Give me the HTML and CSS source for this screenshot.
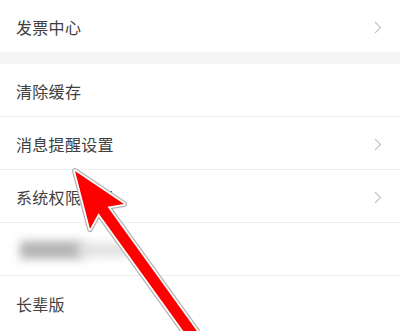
FILE: index.html
```html
<!DOCTYPE html>
<html>
<head>
<meta charset="utf-8">
<link rel="stylesheet" href="styles.css">
</head>
<body>
<div class="page">
  <div class="group">
    <div class="row first"><span class="label">发票中心</span><svg class="chev" width="8" height="13" viewBox="0 0 8 13"><polyline points="1,1 6.5,6.5 1,12" /></svg></div>
  </div>
  <div class="gap"></div>
  <div class="group">
    <div class="row"><span class="label">清除缓存</span></div>
    <div class="row"><span class="label">消息提醒设置</span><svg class="chev" width="8" height="13" viewBox="0 0 8 13"><polyline points="1,1 6.5,6.5 1,12" /></svg></div>
    <div class="row"><span class="label">系统权限设置</span><svg class="chev" width="8" height="13" viewBox="0 0 8 13"><polyline points="1,1 6.5,6.5 1,12" /></svg></div>
    <div class="row"><div class="blur"><span class="b1"></span><span class="b2"></span></div></div>
    <div class="row last"><span class="label">长辈版</span></div>
  </div>
  <svg class="arrow" width="400" height="331" viewBox="0 0 400 331">
    <polygon class="a-out" points="75,171 124,204 107.5,206.8 208,346.4 199,352.8 98.5,213.2 90,229"/>
    <polygon class="a-mid" points="75,171 124,204 107.5,206.8 208,346.4 199,352.8 98.5,213.2 90,229"/>
    <polygon class="a-in" points="75,171 124,204 107.5,206.8 208,346.4 199,352.8 98.5,213.2 90,229"/>
  </svg>
</div>
</body>
</html>
```

FILE: styles.css
```css
html, body {
  margin: 0;
  padding: 0;
  background: #ffffff;
}
.page {
  position: relative;
  width: 400px;
  height: 331px;
  overflow: hidden;
  font-family: "Noto Sans CJK SC", "Noto Sans", sans-serif;
}
.group {
  background: #ffffff;
}
.gap {
  height: 12px;
  background: #f5f5f5;
}
.row {
  height: 53px;
  box-sizing: border-box;
  border-bottom: 1px solid #efefef;
  display: flex;
  align-items: center;
  justify-content: space-between;
  padding: 2px 18px 0 16px;
}
.row.first {
  height: 52px;
  border-bottom: none;
}
.row.last {
  height: 54px;
  border-bottom: none;
}
.label {
  font-size: 16px;
  color: #404040;
  letter-spacing: 0.3px;
}
.chev polyline {
  fill: none;
  stroke: #c6c6c6;
  stroke-width: 1.2;
}
.blur {
  position: relative;
  width: 115px;
  height: 30px;
  filter: blur(5px);
}
.blur .b1 {
  position: absolute;
  left: 4px;
  top: 6px;
  width: 66px;
  height: 18px;
  background: #b4b4b4;
}
.blur .b2 {
  position: absolute;
  left: 62px;
  top: 8px;
  width: 52px;
  height: 14px;
  background: #e2e2e2;
}
.arrow {
  position: absolute;
  left: 0;
  top: 0;
}
.a-out {
  fill: none;
  stroke: #b4b4b4;
  stroke-width: 6;
  stroke-linejoin: round;
}
.a-mid {
  fill: none;
  stroke: #ffffff;
  stroke-width: 3.5;
  stroke-linejoin: round;
}
.a-in {
  fill: #ff0000;
}
```
